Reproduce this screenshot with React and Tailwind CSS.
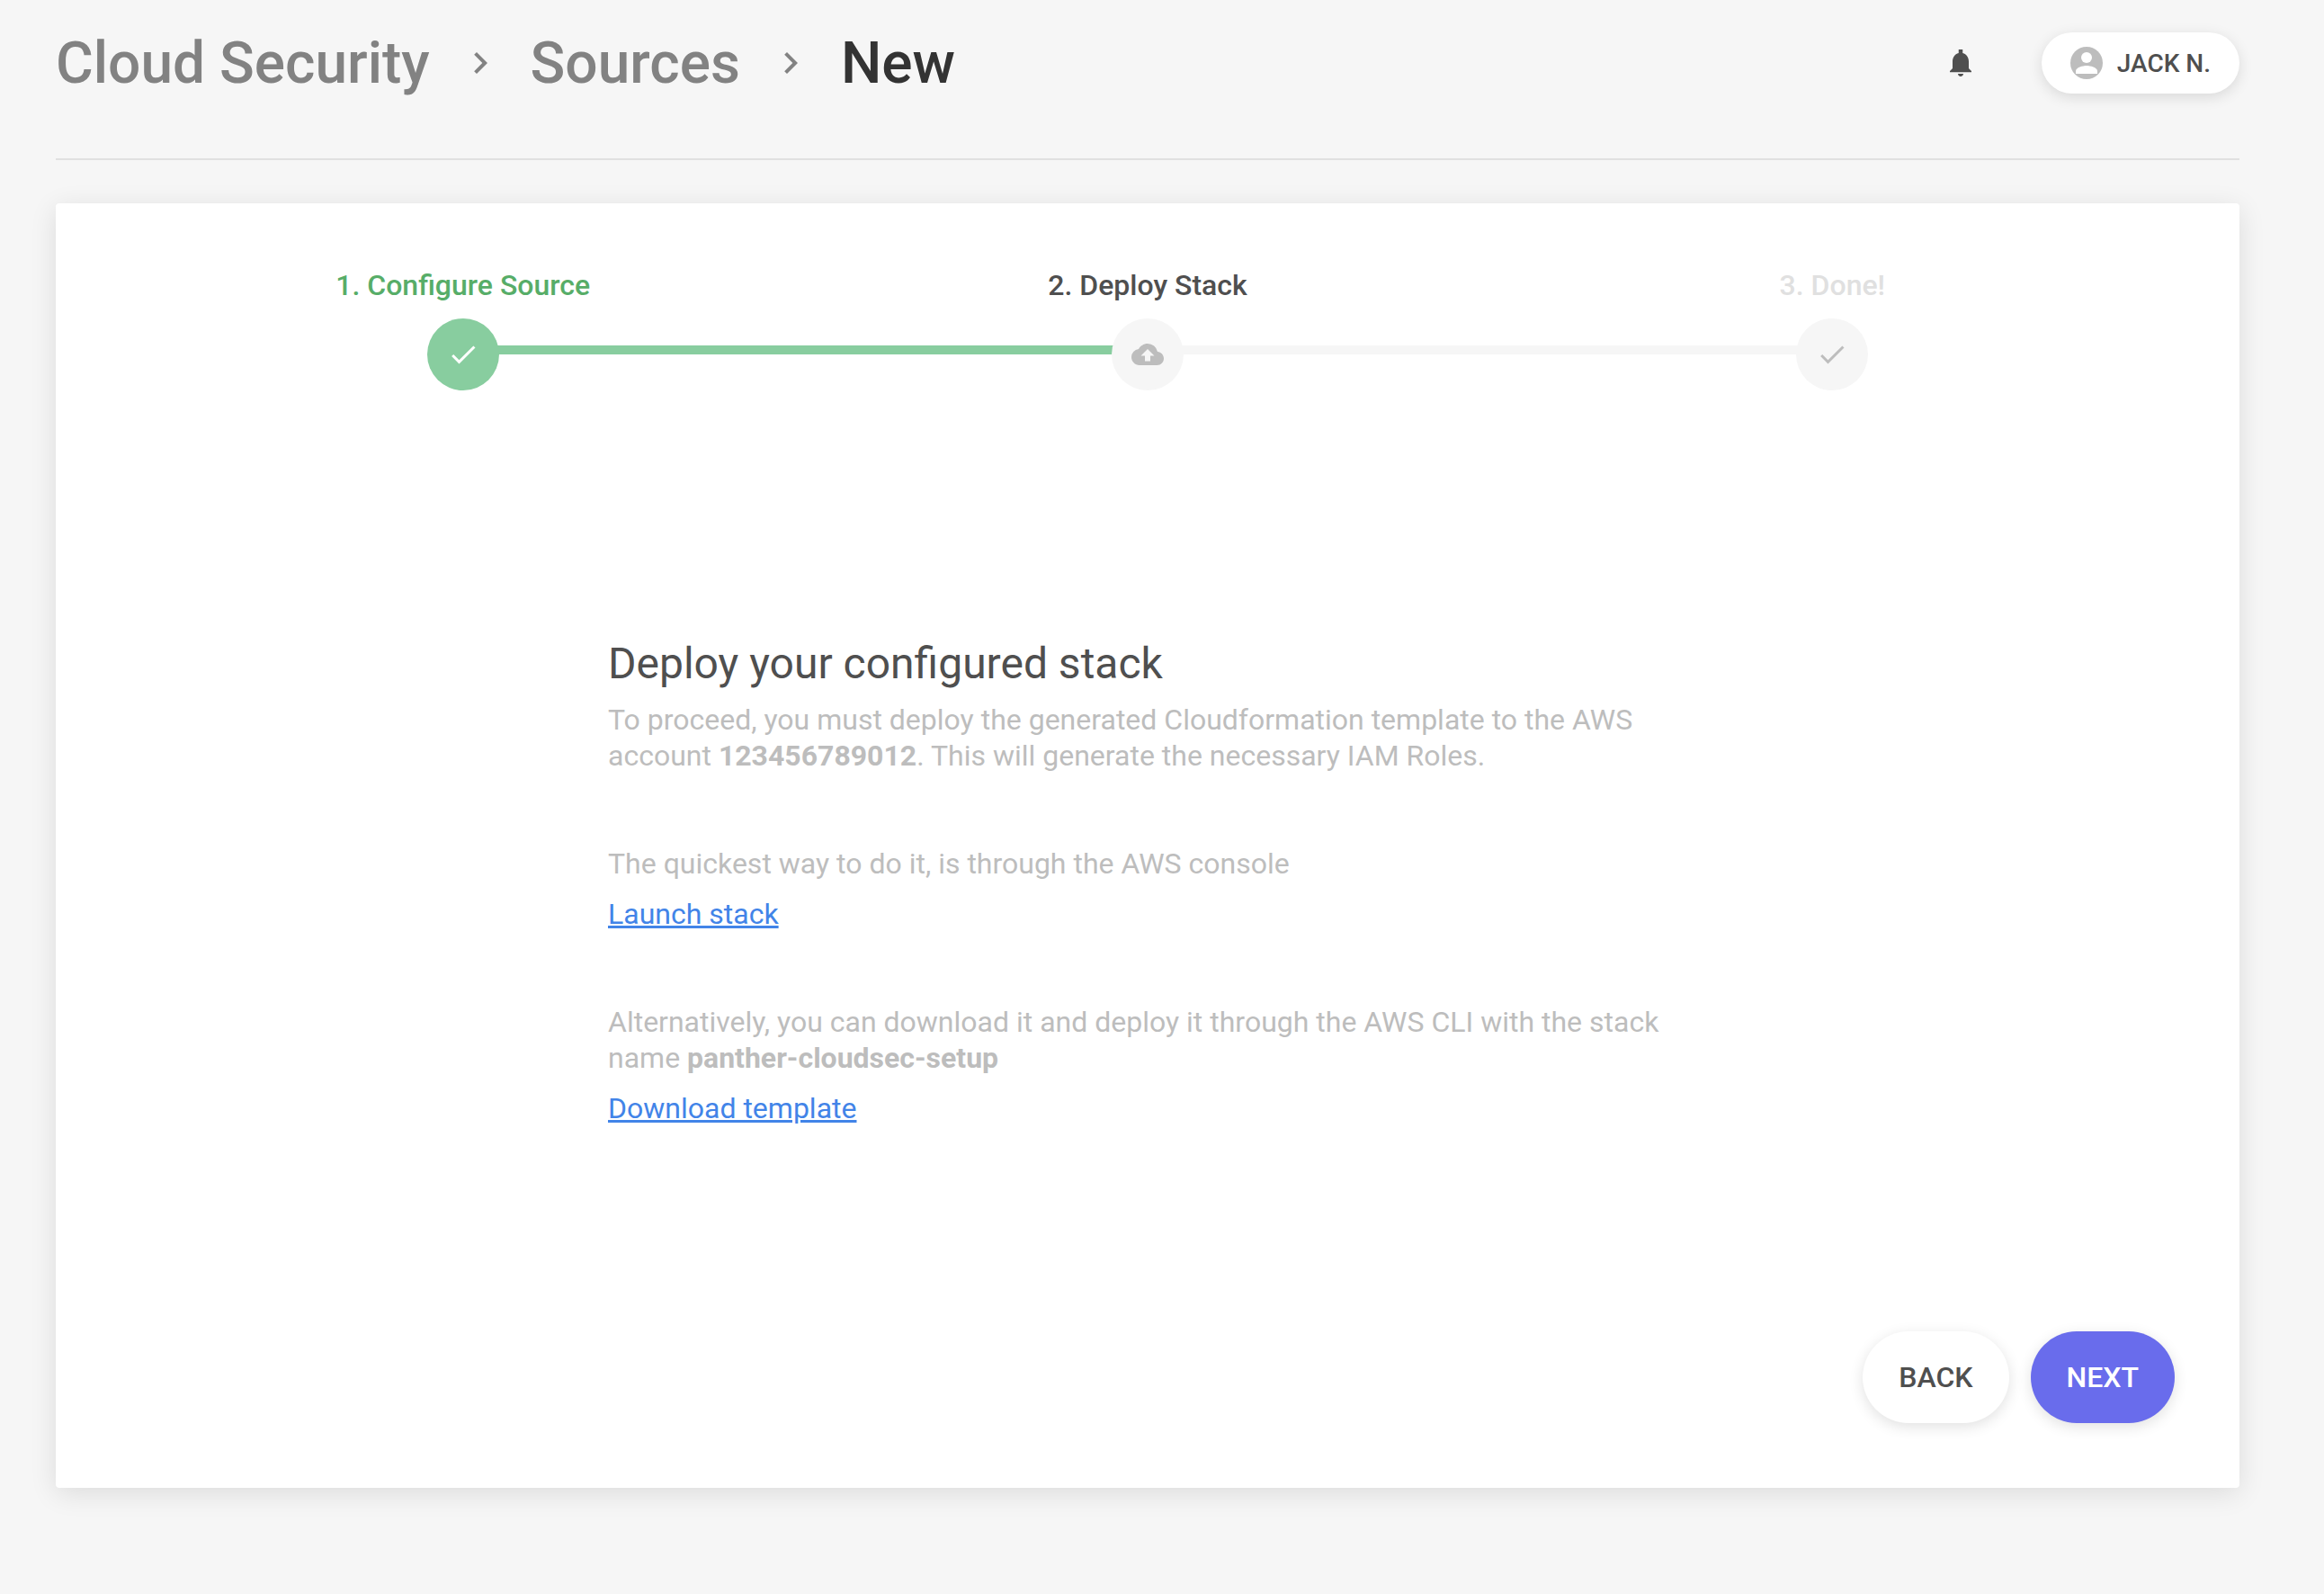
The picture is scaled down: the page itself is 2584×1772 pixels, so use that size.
function Icon({ size = 'size-9', children }) {
  return (
    <svg viewBox="0 0 24 24" fill="currentColor" aria-hidden="true" className={`${size} shrink-0`}>
      {children}
    </svg>
  );
}

const CheckIcon = () => (
  <Icon>
    <path d="M9 16.17L4.83 12l-1.42 1.41L9 19 21 7l-1.41-1.41z" />
  </Icon>
);

const CloudUploadIcon = () => (
  <Icon>
    <path d="M19.35 10.04A7.49 7.49 0 0 0 12 4C9.11 4 6.6 5.64 5.35 8.04A5.994 5.994 0 0 0 0 14c0 3.31 2.69 6 6 6h13c2.76 0 5-2.24 5-5 0-2.64-2.05-4.78-4.65-4.96zM14 13v4h-4v-4H7l5-5 5 5h-3z" />
  </Icon>
);

const ChevronIcon = () => (
  <span className="text-[#828282]">
    <Icon size="size-12">
      <path d="M10 6L8.59 7.41 13.17 12l-4.58 4.59L10 18l6-6z" />
    </Icon>
  </span>
);

const BellIcon = () => (
  <Icon>
    <path d="M12 22c1.1 0 2-.9 2-2h-4c0 1.1.9 2 2 2zM18 16v-5c0-3.07-1.63-5.64-4.5-6.32V2h-3v2.68C7.64 5.36 6 7.92 6 11v5l-2 2v.8h16V18l-2-2z" />
  </Icon>
);

const AvatarIcon = () => (
  <Icon>
    <circle cx="12" cy="12" r="12" fill="#bdbdbd" />
    <circle cx="12" cy="8" r="4" fill="#fff" />
    <path d="M12 14c-2.67 0-8 1.34-8 4v2h16v-2c0-2.66-5.33-4-8-4z" fill="#fff" />
  </Icon>
);

const steps = [
  {
    label: '1. Configure Source',
    text: 'text-[#57ad68]',
    circle: 'bg-[#88cd9f] text-white',
    before: 'bg-transparent',
    after: 'bg-[#88cd9f]',
    icon: <CheckIcon />,
  },
  {
    label: '2. Deploy Stack',
    text: 'text-[#4f4f4f]',
    circle: 'bg-[#f6f6f6] text-[#bdbdbd]',
    before: 'bg-[#88cd9f]',
    after: 'bg-[#f6f6f6]',
    icon: <CloudUploadIcon />,
  },
  {
    label: '3. Done!',
    text: 'text-[#e0e0e0]',
    circle: 'bg-[#f6f6f6] text-[#bdbdbd]',
    before: 'bg-[#f6f6f6]',
    after: 'bg-transparent',
    icon: <CheckIcon />,
  },
];

function Stepper() {
  return (
    <ol className="grid grid-cols-3">
      {steps.map((s) => (
        <li key={s.label} className="flex flex-col items-center gap-[18px]">
          <span className={`text-[32px] leading-[38px] font-medium ${s.text}`}>{s.label}</span>
          <div className="flex w-full items-start">
            <span className={`mt-[30px] h-[10px] flex-1 ${s.before}`} />
            <span className={`relative -mx-1 flex size-20 items-center justify-center rounded-full ${s.circle}`}>
              {s.icon}
            </span>
            <span className={`mt-[30px] h-[10px] flex-1 ${s.after}`} />
          </div>
        </li>
      ))}
    </ol>
  );
}

export default function App() {
  return (
    <div className="min-h-screen bg-[#f6f6f6] pr-[94px] pl-[62px] pb-[118px] font-[Roboto,sans-serif] text-[#4f4f4f]">
      <header className="flex items-center justify-between border-b-2 border-[#e0e0e0] pt-9 pb-[72px]">
        <nav aria-label="Breadcrumb" className="flex h-[68px] items-center gap-8 text-[64px] leading-[75px] font-medium">
          <a href="#cloud-security" className="text-[#828282]">Cloud Security</a>
          <ChevronIcon />
          <a href="#sources" className="text-[#828282]">Sources</a>
          <ChevronIcon />
          <span aria-current="page" className="text-[#333333]">New</span>
        </nav>
        <div className="flex items-center gap-[72px]">
          <button type="button" aria-label="Notifications" className="flex">
            <BellIcon />
          </button>
          <button
            type="button"
            className="flex h-[68px] items-center gap-4 rounded-full bg-white px-8 text-[28px] leading-[33px] font-medium shadow-[0_4px_16px_rgba(0,0,0,0.12)]"
          >
            <AvatarIcon />
            JACK N.
          </button>
        </div>
      </header>

      <main className="mt-12 rounded-[4px] bg-white p-[72px] shadow-[0_6px_30px_rgba(0,0,0,0.11)]">
        <Stepper />

        <section className="mx-auto mt-[276px] flex max-w-[1200px] flex-col gap-20 text-[32px] leading-10 text-[#bdbdbd]">
          <div className="flex flex-col gap-[14px]">
            <h1 className="text-[48px] leading-14 text-[#4f4f4f]">Deploy your configured stack</h1>
            <p>
              To proceed, you must deploy the generated Cloudformation template to the AWS account{' '}
              <b className="font-bold">123456789012</b>. This will generate the necessary IAM Roles.
            </p>
          </div>
          <div className="flex flex-col items-start gap-4">
            <p>The quickest way to do it, is through the AWS console</p>
            <a href="#launch" className="text-[#4284e8] underline">Launch stack</a>
          </div>
          <div className="flex flex-col items-start gap-4">
            <p>
              Alternatively, you can download it and deploy it through the AWS CLI with the stack name{' '}
              <b className="font-bold">panther-cloudsec-setup</b>
            </p>
            <a href="#download" className="text-[#4284e8] underline">Download template</a>
          </div>
        </section>

        <div className="mt-[228px] flex justify-end gap-6 text-[32px] leading-[38px] font-medium">
          <button type="button" className="rounded-full bg-white px-10 py-8 shadow-[0_4px_16px_rgba(0,0,0,0.12)]">
            BACK
          </button>
          <button type="button" className="rounded-full bg-[#696cec] px-10 py-8 text-white shadow-[0_4px_16px_rgba(0,0,0,0.12)]">
            NEXT
          </button>
        </div>
      </main>
    </div>
  );
}
